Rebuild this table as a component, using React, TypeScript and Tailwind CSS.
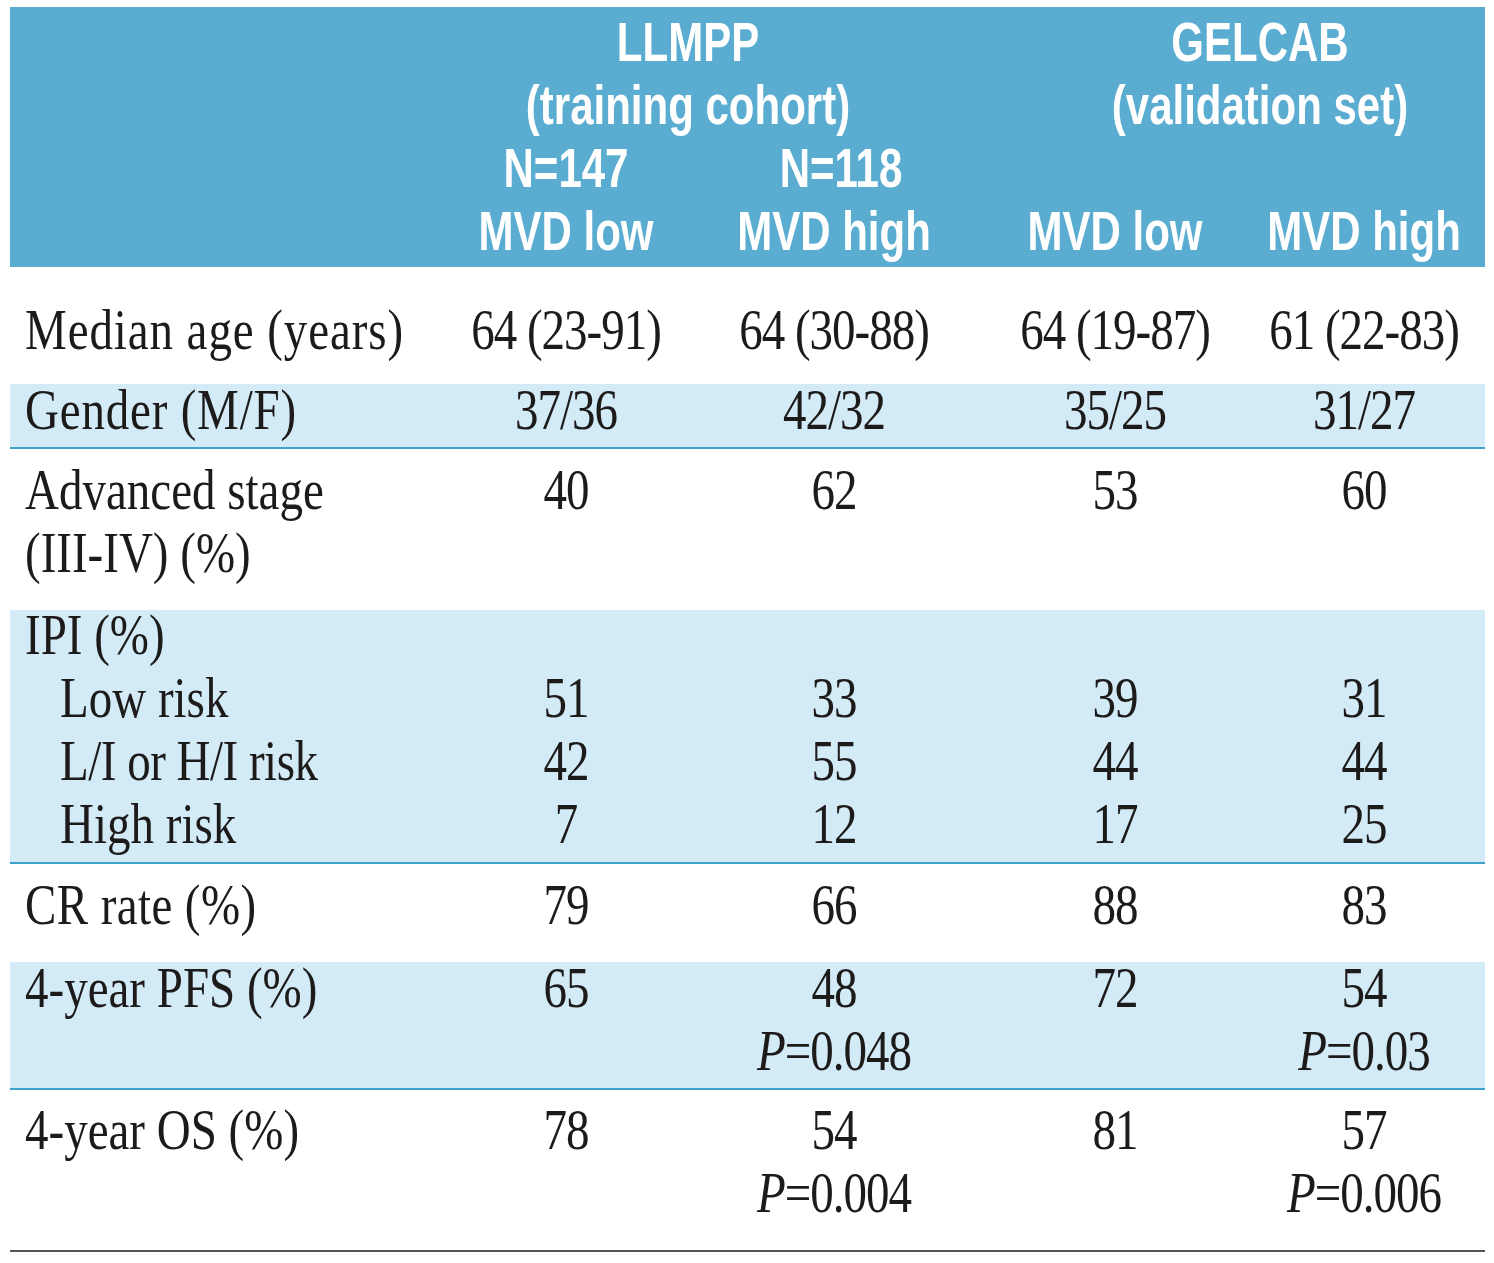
import type { ReactNode } from 'react';

const cols = 'grid grid-cols-[441px_230px_306px_256px_242px]';

// one printed line of the table body; the serif is squeezed by stretching it upwards
const Line = ({ children, className = '' }: { children?: ReactNode; className?: string }) => (
  <div className={`h-[63px] leading-[63px] origin-bottom scale-y-[1.22] whitespace-nowrap ${className}`}>
    {children}
  </div>
);

const HLine = ({ children, className = '' }: { children?: ReactNode; className?: string }) => (
  <div className={`h-[63px] leading-[63px] origin-bottom scale-y-[1.33] whitespace-nowrap ${className}`}>
    {children}
  </div>
);

const Num = ({ children }: { children?: ReactNode }) => (
  <Line className="text-center tracking-[-1px]">{children}</Line>
);

const PVal = ({ value }: { value: string }) => (
  <Line className="text-center tracking-[-1px]">
    <i>P</i>={value}
  </Line>
);

interface RowProps {
  label: ReactNode;
  cells: ReactNode[];
  className: string;
}

const Row = ({ label, cells, className }: RowProps) => (
  <div className={`${cols} ${className}`}>
    <div className="pl-[15px]">{label}</div>
    {cells.map((c, i) => (
      <div key={i}>{c}</div>
    ))}
  </div>
);

const App = () => {
  return (
    <div className="min-h-[1263px] bg-white pt-[7px] pl-[10px] font-['Liberation_Serif',serif] text-[47px] text-[#1d1a1a]">
      <div className="w-[1475px]">
        {/* Header */}
        <div className="h-[260px] bg-[#5aadd0] pt-[14px] font-['Liberation_Sans',sans-serif] text-[42px] font-bold text-white">
          <div className={cols}>
            <div />
            <div className="col-span-2 pr-[62px] text-center">
              <HLine>LLMPP</HLine>
              <HLine>(training cohort)</HLine>
            </div>
            <div className="col-span-2 pl-[48px] text-center">
              <HLine>GELCAB</HLine>
              <HLine>(validation set)</HLine>
            </div>
            <div />
            <HLine className="text-center">N=147</HLine>
            <HLine className="pl-[14px] text-center">N=118</HLine>
            <div />
            <div />
            <div />
            <HLine className="text-center">MVD low</HLine>
            <HLine className="text-center">MVD high</HLine>
            <HLine className="text-center">MVD low</HLine>
            <HLine className="text-center">MVD high</HLine>
          </div>
        </div>

        <Row
          className="h-[117px] pt-[39px]"
          label={<Line className="tracking-[0.9px]">Median age (years)</Line>}
          cells={[
            <Num>64 (23-91)</Num>,
            <Num>64 (30-88)</Num>,
            <Num>64 (19-87)</Num>,
            <Num>61 (22-83)</Num>,
          ]}
        />
        <Row
          className="h-[65px] border-b-2 border-[#3da3c9] bg-[#d3eaf7] pt-[2px]"
          label={<Line className="tracking-[0.8px]">Gender (M/F)</Line>}
          cells={[<Num>37/36</Num>, <Num>42/32</Num>, <Num>35/25</Num>, <Num>31/27</Num>]}
        />
        <Row
          className="h-[161px] pt-[17px]"
          label={
            <>
              <Line>Advanced stage</Line>
              <Line>(III-IV) (%)</Line>
            </>
          }
          cells={[<Num>40</Num>, <Num>62</Num>, <Num>53</Num>, <Num>60</Num>]}
        />
        <Row
          className="h-[254px] border-b-2 border-[#3da3c9] bg-[#d3eaf7] pt-[1px]"
          label={
            <>
              <Line>IPI (%)</Line>
              <Line className="pl-[35px]">Low risk</Line>
              <Line className="pl-[35px] tracking-[-0.5px]">L/I or H/I risk</Line>
              <Line className="pl-[35px]">High risk</Line>
            </>
          }
          cells={[
            ['51', '42', '7'],
            ['33', '55', '12'],
            ['39', '44', '17'],
            ['31', '44', '25'],
          ].map((v) => (
            <>
              <Line />
              {v.map((n, j) => (
                <Num key={j}>{n}</Num>
              ))}
            </>
          ))}
        />
        <Row
          className="h-[98px] pt-[17px]"
          label={<Line className="tracking-[0.4px]">CR rate (%)</Line>}
          cells={[<Num>79</Num>, <Num>66</Num>, <Num>88</Num>, <Num>83</Num>]}
        />
        <Row
          className="h-[128px] border-b-2 border-[#3da3c9] bg-[#d3eaf7] pt-[2px]"
          label={<Line>4-year PFS (%)</Line>}
          cells={[
            <Num>65</Num>,
            <>
              <Num>48</Num>
              <PVal value="0.048" />
            </>,
            <Num>72</Num>,
            <>
              <Num>54</Num>
              <PVal value="0.03" />
            </>,
          ]}
        />
        <Row
          className="h-[162px] border-b-2 border-[#555] pt-[16px]"
          label={<Line>4-year OS (%)</Line>}
          cells={[
            <Num>78</Num>,
            <>
              <Num>54</Num>
              <PVal value="0.004" />
            </>,
            <Num>81</Num>,
            <>
              <Num>57</Num>
              <PVal value="0.006" />
            </>,
          ]}
        />
      </div>
    </div>
  );
};

export default App;
